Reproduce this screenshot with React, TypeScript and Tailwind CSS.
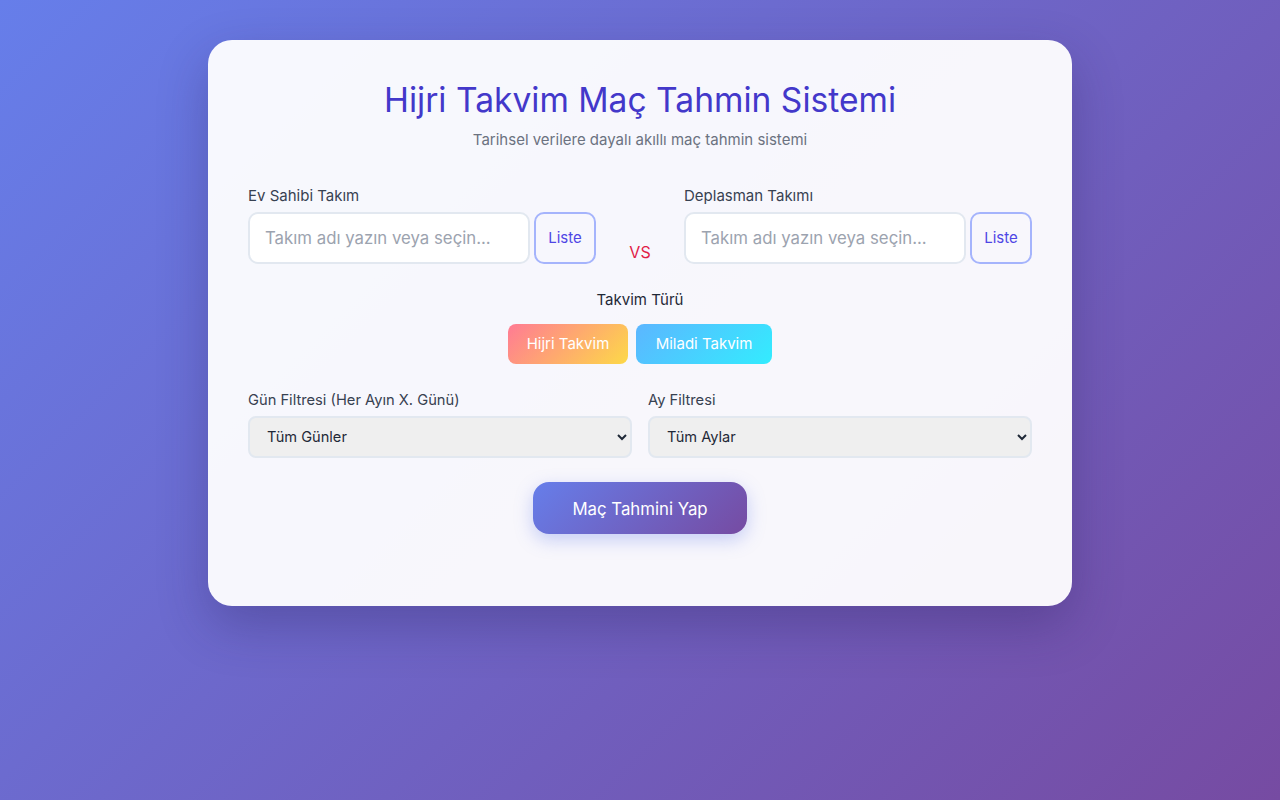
import { useState } from 'react'

// Team picker column (label + text input + list button)
function TeamField({ label, value, onChange }: { label: string; value: string; onChange: (v: string) => void }) {
  return (
    <div className="flex flex-col">
      <label className="text-[15px] leading-5 text-[#374151] mb-[6px]">{label}</label>
      <div className="flex gap-1">
        <input
          value={value}
          onChange={e => onChange(e.target.value)}
          placeholder="Takım adı yazın veya seçin..."
          className="w-[282px] h-[52px] rounded-[10px] border-2 border-[#e2e8f0] bg-white px-[15px] text-[16.8px] text-[#1f2937] placeholder:text-[#9ca3af] outline-none"
        />
        <button className="w-[62px] h-[52px] rounded-[10px] border-2 border-[#a5b4fc] text-[15px] text-[#4f46e5] bg-transparent pt-[1px]">
          Liste
        </button>
      </div>
    </div>
  )
}

export default function App() {
  const [home, setHome] = useState('')
  const [away, setAway] = useState('')
  const [calendar, setCalendar] = useState<'hijri' | 'miladi'>('hijri')

  return (
    <div
      className="min-h-screen w-full bg-[linear-gradient(135deg,#667eea_0%,#764ba2_100%)] pt-10"
      style={{ fontFamily: 'Inter, "Noto Sans", sans-serif' }}
    >
      <div className="mx-auto w-[864px] rounded-[24px] bg-white/95 px-10 pt-10 pb-[72px] shadow-[0_20px_50px_rgba(40,30,90,0.3)]">
        {/* Header */}
        <div className="text-center">
          <h1 className="text-[33.6px] leading-10 font-normal text-[#4338ca]">Hijri Takvim Maç Tahmin Sistemi</h1>
          <p className="mt-2 text-[15px] leading-6 text-[#6b7280]">Tarihsel verilere dayalı akıllı maç tahmin sistemi</p>
        </div>

        {/* Teams */}
        <div className="mt-[34px] grid grid-cols-[348px_88px_348px]">
          <TeamField label="Ev Sahibi Takım" value={home} onChange={setHome} />
          <div className="flex items-end justify-center">
            <span className="text-[16px] leading-6 text-[#e11d48]">VS</span>
          </div>
          <TeamField label="Deplasman Takımı" value={away} onChange={setAway} />
        </div>

        {/* Calendar type */}
        <div className="mt-[26px] flex flex-col items-center">
          <span className="text-[15px] leading-5 text-[#1f2937]">Takvim Türü</span>
          <div className="mt-[14px] flex gap-2">
            <button
              onClick={() => setCalendar('hijri')}
              className="h-10 w-[120px] rounded-lg bg-[linear-gradient(135deg,#ff7b94_0%,#fdd948_100%)] text-[15px] text-white"
            >
              Hijri Takvim
            </button>
            <button
              onClick={() => setCalendar('miladi')}
              className="h-10 w-[136px] rounded-lg bg-[linear-gradient(135deg,#5cb6ff_0%,#33ecfe_100%)] text-[15px] text-white"
            >
              Miladi Takvim
            </button>
          </div>
        </div>

        {/* Filters */}
        <div className="mt-[26px] grid grid-cols-2 gap-4">
          <div className="flex flex-col">
            <label className="text-[14.7px] leading-5 text-[#374151] mb-[6px]">Gün Filtresi (Her Ayın X. Günü)</label>
            <select className="h-[42px] rounded-lg border-2 border-[#e2e8f0] bg-[#efefef] px-[13px] text-[14.6px] text-[#1f2937]">
              <option>Tüm Günler</option>
            </select>
          </div>
          <div className="flex flex-col">
            <label className="text-[14.7px] leading-5 text-[#374151] mb-[6px]">Ay Filtresi</label>
            <select className="h-[42px] rounded-lg border-2 border-[#e2e8f0] bg-[#efefef] px-[13px] text-[14.6px] text-[#1f2937]">
              <option>Tüm Aylar</option>
            </select>
          </div>
        </div>

        {/* Submit */}
        <div className="mt-6 flex justify-center">
          <button
            data-calendar={calendar}
            className="h-[52px] w-[214px] rounded-2xl bg-[linear-gradient(135deg,#667eea_0%,#764ba2_100%)] pt-[3px] text-[16.8px] text-white shadow-[0_6px_18px_rgba(102,126,234,0.35)]"
          >
            Maç Tahmini Yap
          </button>
        </div>
      </div>
    </div>
  )
}
